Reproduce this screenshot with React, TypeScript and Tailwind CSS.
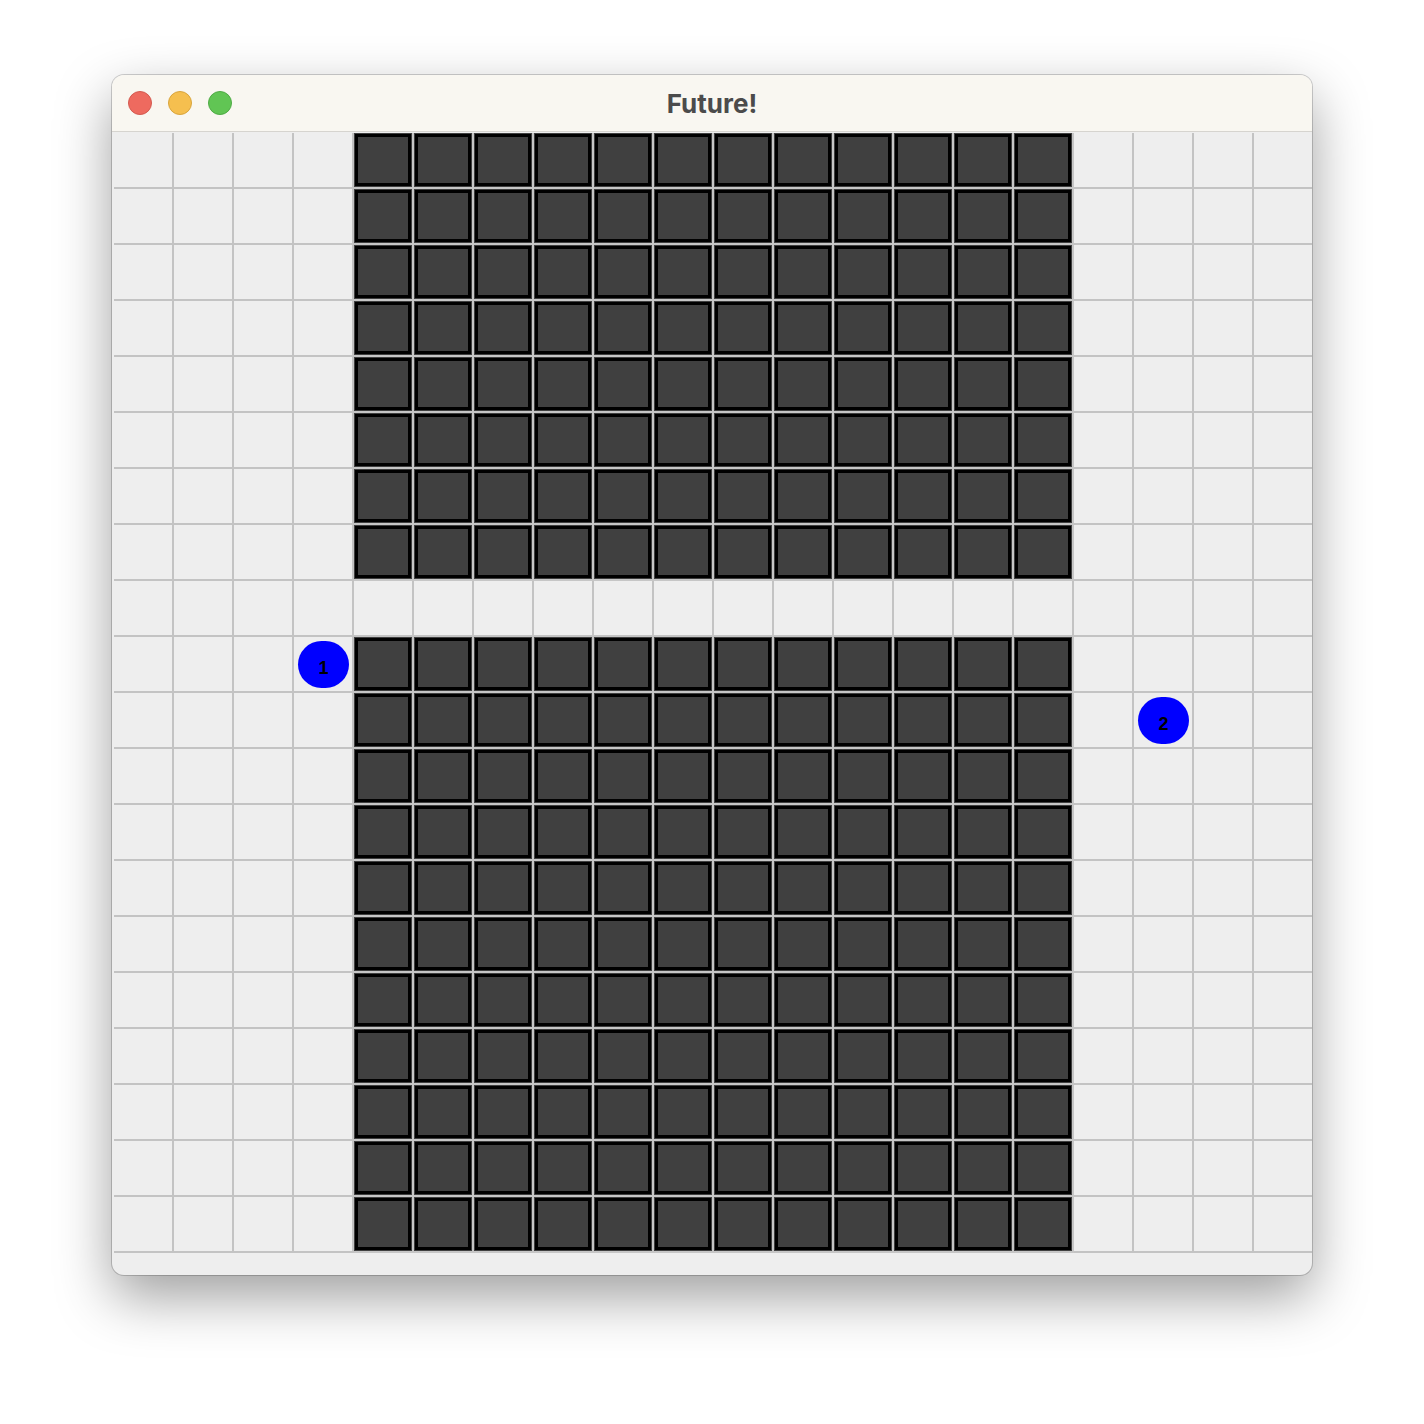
import React from 'react';

const COLS = 20;
const ROWS = 20;

// dark blocks: columns 4..15, every row except row 8
const isWall = (r: number, c: number) => c >= 4 && c <= 15 && r !== 8;

const players: { r: number; c: number; label: string }[] = [
  { r: 9, c: 3, label: '1' },
  { r: 10, c: 17, label: '2' },
];

const Cell: React.FC<{ r: number; c: number }> = ({ r, c }) => {
  const player = players.find(p => p.r === r && p.c === c);

  if (isWall(r, c)) {
    return (
      <div className="w-[60px] h-[56px] border-r-2 border-b-2 border-[#c6c6c6] bg-[#404040] p-px">
        <div className="w-full h-full border-[3px] border-black bg-[#404040]" />
      </div>
    );
  }

  return (
    <div className="w-[60px] h-[56px] border-r-2 border-b-2 border-[#c3c3c3] bg-[#eeeeee] flex items-center justify-center">
      {player && (
        <div className="w-[51px] h-[47px] ml-[1px] mt-[1px] rounded-full bg-[#0000ff] flex items-center justify-center pt-[7px]">
          <span className="text-[18px] font-bold text-black leading-none" style={{ fontFamily: '"Liberation Sans", Arial, sans-serif' }}>
            {player.label}
          </span>
        </div>
      )}
    </div>
  );
};

const App: React.FC = () => {
  const cells = [];
  for (let r = 0; r < ROWS; r++) {
    for (let c = 0; c < COLS; c++) {
      cells.push(<Cell key={`${r}-${c}`} r={r} c={c} />);
    }
  }

  return (
    <div className="w-[1424px] h-[1424px] bg-white pt-[75px] flex justify-center">
      <div className="w-[1200px] h-[1200px] rounded-[12px] overflow-hidden bg-[#eeeeee] flex flex-col shadow-[0_22px_55px_rgba(0,0,0,0.38),0_0_0_1px_rgba(0,0,0,0.18)]">
        {/* title bar */}
        <div className="relative h-[57px] bg-[#f9f7f1] border-b border-[#d6d4cf] flex items-center justify-center shrink-0">
          <div className="absolute left-[16px] top-[16px] flex gap-[16px]">
            <span className="w-[24px] h-[24px] rounded-full bg-[#ee6a5f] border border-[#d45a50]" />
            <span className="w-[24px] h-[24px] rounded-full bg-[#f5bf4f] border border-[#d9a53d]" />
            <span className="w-[24px] h-[24px] rounded-full bg-[#61c554] border border-[#4fab45]" />
          </div>
          <span className="text-[26px] font-bold text-[#4b4b4b]" style={{ fontFamily: 'Inter, "Open Sans", sans-serif' }}>
            Future!
          </span>
        </div>
        {/* board */}
        <div className="grid grid-cols-[repeat(20,60px)] ml-[2px] mt-[1px] w-[1200px]">{cells}</div>
      </div>
    </div>
  );
};

export default App;
